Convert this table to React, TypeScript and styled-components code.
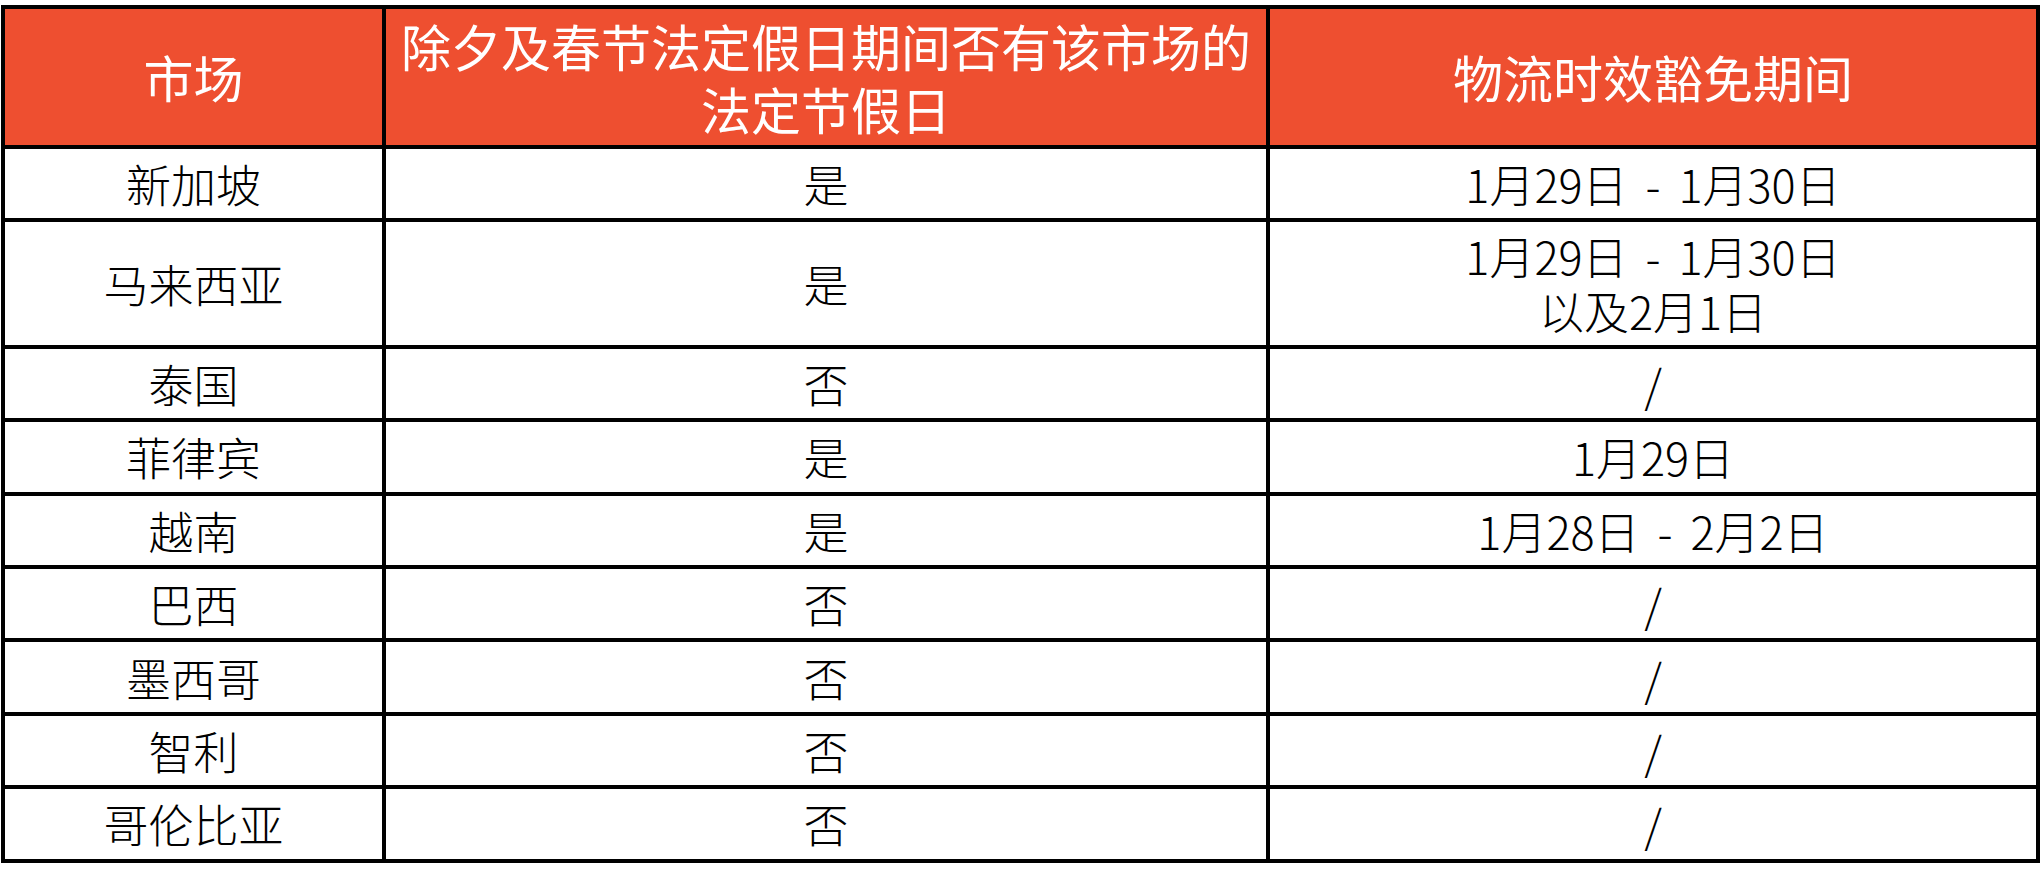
import React from "react";
import styled, { createGlobalStyle } from "styled-components";

const GlobalStyle = createGlobalStyle`
  html, body {
    margin: 0;
    padding: 0;
    background: #ffffff;
  }
  body {
    font-family: "Noto Sans CJK SC", "Noto Sans", sans-serif;
  }
`;

const Page = styled.div`
  padding: 5px 0 0 1px;
  background: #ffffff;
`;

const Table = styled.div`
  display: grid;
  grid-template-columns: 377px 880px 766px;
  grid-template-rows: 135.5px 69.4px 123px repeat(7, 69.4px);
  gap: 4px;
  padding: 4px;
  width: max-content;
  background: #000000;
`;

const Cell = styled.div<{ $header?: boolean }>`
  display: flex;
  flex-direction: column;
  align-items: center;
  justify-content: center;
  text-align: center;
  background: ${(p) => (p.$header ? "#ee4f30" : "#ffffff")};
  color: ${(p) => (p.$header ? "#ffffff" : "#000000")};
  font-family: "Noto Sans CJK SC", "Noto Sans", sans-serif;
  font-size: ${(p) => (p.$header ? "50px" : "45px")};
  font-weight: ${(p) => (p.$header ? 400 : 300)};
  word-spacing: ${(p) => (p.$header ? "0" : "8px")};
  white-space: nowrap;
`;

const Line = styled.div<{ $header?: boolean }>`
  height: ${(p) => (p.$header ? "63px" : "55px")};
  line-height: ${(p) => (p.$header ? "63px" : "55px")};
  overflow: visible;
`;

type Row = { market: string; holiday: string; period: string[] };

const rows: Row[] = [
  { market: "新加坡", holiday: "是", period: ["1月29日 - 1月30日"] },
  { market: "马来西亚", holiday: "是", period: ["1月29日 - 1月30日", "以及2月1日"] },
  { market: "泰国", holiday: "否", period: ["/"] },
  { market: "菲律宾", holiday: "是", period: ["1月29日"] },
  { market: "越南", holiday: "是", period: ["1月28日 - 2月2日"] },
  { market: "巴西", holiday: "否", period: ["/"] },
  { market: "墨西哥", holiday: "否", period: ["/"] },
  { market: "智利", holiday: "否", period: ["/"] },
  { market: "哥伦比亚", holiday: "否", period: ["/"] },
];

export default function App() {
  return (
    <>
      <GlobalStyle />
      <Page>
        <Table>
          <Cell $header>
            <Line $header>市场</Line>
          </Cell>
          <Cell $header>
            <Line $header>除夕及春节法定假日期间否有该市场的</Line>
            <Line $header>法定节假日</Line>
          </Cell>
          <Cell $header>
            <Line $header>物流时效豁免期间</Line>
          </Cell>
          {rows.map((r) => (
            <React.Fragment key={r.market}>
              <Cell>
                <Line>{r.market}</Line>
              </Cell>
              <Cell>
                <Line>{r.holiday}</Line>
              </Cell>
              <Cell>
                {r.period.map((line, i) => (
                  <Line key={i}>{line}</Line>
                ))}
              </Cell>
            </React.Fragment>
          ))}
        </Table>
      </Page>
    </>
  );
}
